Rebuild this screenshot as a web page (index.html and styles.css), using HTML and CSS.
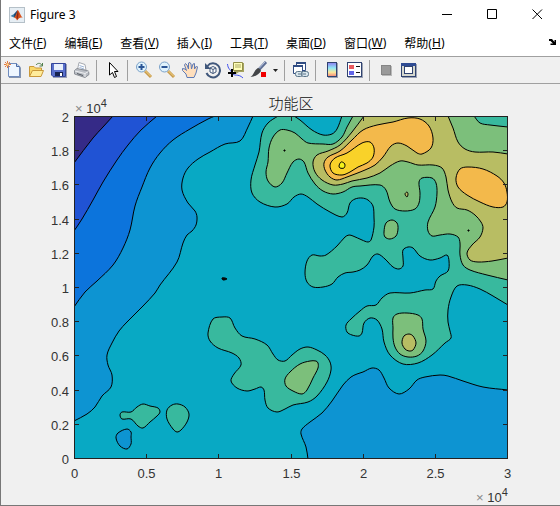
FILE: index.html
```
<!DOCTYPE html>
<html lang="zh-CN">
<head>
    <meta charset="UTF-8">
    <meta name="viewport" content="width=device-width, initial-scale=1.0">
    <title>Figure 3</title>
    <link rel="stylesheet" href="styles.css">
</head>
<body>
<div class="window">
    <header class="titlebar">
        <svg class="app-icon" viewBox="0 0 16 16" aria-hidden="true">
            <rect x="0.5" y="0.5" width="15" height="15" fill="#e6eef4" stroke="#b5c0c8"/>
            <path d="M1.5 9L5 7L7 8.5L5 10.5Z" fill="#3b7fa8"/>
            <path d="M5 7L8.5 3L8 9L5 10.5Z" fill="#1f4d78"/>
            <path d="M8.5 3C9.5 2 11 8 14 11C11.5 10 10 11 8 13.5C7.5 11.5 6.5 11 5 10.5C7 9 7.5 6 8.5 3Z" fill="#d9541e"/>
            <path d="M8.7 3.5L9.5 7L9 11L8 13L7.5 10Z" fill="#8c2a14"/>
        </svg>
        <h1 class="title">Figure 3</h1>
        <div class="window-buttons">
            <button type="button" aria-label="最小化"><svg viewBox="0 0 11 11"><path d="M0 5.5H10"/></svg></button>
            <button type="button" aria-label="最大化"><svg viewBox="0 0 11 11"><path d="M0.5 0.5H9.5V9.5H0.5Z"/></svg></button>
            <button type="button" aria-label="关闭"><svg viewBox="0 0 11 11"><path d="M0.5 0.5L10 10M10 0.5L0.5 10"/></svg></button>
        </div>
    </header>

    <nav class="menubar">
        <button type="button">文件(<u>F</u>)</button>
        <button type="button">编辑(<u>E</u>)</button>
        <button type="button">查看(<u>V</u>)</button>
        <button type="button">插入(<u>I</u>)</button>
        <button type="button">工具(<u>T</u>)</button>
        <button type="button">桌面(<u>D</u>)</button>
        <button type="button">窗口(<u>W</u>)</button>
        <button type="button">帮助(<u>H</u>)</button>
        <button type="button" class="dock" aria-label="停靠">
            <svg viewBox="0 0 8 7"><path d="M0 0H3L5.5 3V1H7V6H1.5V4.5H4L1.5 2H0Z" fill="#000"/></svg>
        </button>
    </nav>

    <div class="toolbar">
        <button type="button" aria-label="新建图形">
            <svg viewBox="0 0 18 18">
                <path d="M5 3H13.5L17 6.5V17H5Z" fill="#8494ae"/>
                <path d="M4.5 2.5H12.5L15.5 5.5V15.5H4.5Z" fill="#eef6ff" stroke="#6f8bbd"/>
                <path d="M12.5 2.5V5.5H15.5" fill="#c5d8f0" stroke="#4969a5"/>
                <path d="M1 1L6 6M6 1L1 6M3.5 0V7M0 3.5H7" stroke="#e57b42"/>
                <rect x="2.5" y="2.5" width="2" height="2" fill="#ffe89a"/>
            </svg>
        </button>
        <button type="button" aria-label="打开文件">
            <svg viewBox="0 0 18 18">
                <path d="M2.5 15.5V5.5H7L8.5 7H14.5V9" fill="#f8d76a" stroke="#c9983a"/>
                <path d="M2.5 15.5L5.5 9.5H16.5L14 15.5Z" fill="#ffec9b" stroke="#c9983a"/>
                <path d="M9 4C11 1.5 14 2 15 4.5M15.5 2V5H12.5" fill="none" stroke="#4e7d4a"/>
            </svg>
        </button>
        <button type="button" aria-label="保存图形">
            <svg viewBox="0 0 18 18">
                <path d="M2 3H17V17H3Z" fill="#9a9fb5"/>
                <path d="M1.5 2.5H15.5V15.5H3L1.5 14Z" fill="#5a70cc" stroke="#34469a"/>
                <rect x="4" y="3" width="9" height="6" fill="#e8f0fc"/>
                <rect x="5" y="11" width="8" height="4" fill="#17224f"/>
                <rect x="10" y="12" width="2" height="3" fill="#fff"/>
            </svg>
        </button>
        <button type="button" aria-label="打印图形">
            <svg viewBox="0 0 18 18">
                <path d="M4.5 8.5L6 1.5L12 3.5L13 9Z" fill="#fff" stroke="#a5a9b0"/>
                <path d="M6.5 4.5L11 6M6.5 6.5L11 8" stroke="#9bb4d6"/>
                <path d="M1.5 9.5L4 7.5L15.5 10L16 13.5L12 16.5L1.5 13Z" fill="#b9bdc4" stroke="#8b8f96"/>
                <path d="M2 10L12 12.5L15.5 10.5M12 12.5V16" fill="none" stroke="#eff0f2"/>
                <path d="M4 12.5L10 14.5" stroke="#555a61"/>
            </svg>
        </button>
        <span class="sep"></span>
        <button type="button" aria-label="编辑绘图">
            <svg viewBox="0 0 18 18"><path d="M5.5 1.5V14L8.5 11.5L10.5 16.5L12.5 15.5L10.5 10.5H14Z" fill="#fff" stroke="#000"/></svg>
        </button>
        <span class="sep"></span>
        <button type="button" aria-label="放大">
            <svg viewBox="0 0 18 18">
                <path d="M10 10L16 16" stroke="#c79a4c" stroke-width="3"/><path d="M10 9.5L16 15.5" stroke="#f5d78a"/>
                <circle cx="6.5" cy="6" r="5" fill="#dff2fc" stroke="#7aa1c9"/>
                <path d="M3.5 6H9.5M6.5 3V9" stroke="#2a5596" stroke-width="2"/>
            </svg>
        </button>
        <button type="button" aria-label="缩小">
            <svg viewBox="0 0 18 18">
                <path d="M10 10L16 16" stroke="#c79a4c" stroke-width="3"/><path d="M10 9.5L16 15.5" stroke="#f5d78a"/>
                <circle cx="6.5" cy="6" r="5" fill="#dff2fc" stroke="#7aa1c9"/>
                <path d="M3.5 6H9.5" stroke="#2a5596" stroke-width="2"/>
            </svg>
        </button>
        <button type="button" aria-label="平移">
            <svg viewBox="0 0 18 18"><path d="M6 16.5L5 13L1.5 9.5L1.5 7.5L4 8L5.5 9.5L3.5 4L4.5 2.5L6 4L7.5 8L7.5 2L9 1.5L10 3L10.5 8L12 3L13.5 2.5L13.5 8L15.5 5L16.5 6L15 12L13 16.5Z" fill="#ffdfbd" stroke="#5f7bb5"/></svg>
        </button>
        <button type="button" aria-label="三维旋转">
            <svg viewBox="0 0 18 18">
                <path d="M3.5 5A7 7 0 1 1 2.5 12" fill="none" stroke="#40577b" stroke-width="2"/>
                <path d="M1 2V8H7Z" fill="#40577b"/>
                <path d="M6 7L9 5.5L12 7V11L9 12.5L6 11ZM6 7L9 8.5L12 7M9 8.5V12.5" fill="#fff" stroke="#40577b"/>
            </svg>
        </button>
        <button type="button" aria-label="数据游标">
            <svg viewBox="0 0 18 18">
                <path d="M0.5 3C1 8 3 8 5 12S11 12 16 17" fill="none" stroke="#4252ed"/>
                <path d="M7 2H17V11H12L9 13V11H7Z" fill="#a5a35e"/>
                <path d="M6.5 1.5H15.5V9.5H6.5Z" fill="#ffffb8" stroke="#928f49"/>
                <path d="M8 4H14M8 6H14" stroke="#aaa766"/>
                <path d="M1 12H9M5 8V16" stroke="#000" stroke-width="2"/>
            </svg>
        </button>
        <button type="button" aria-label="刷亮数据">
            <svg viewBox="0 0 18 18">
                <path d="M16 1L8.5 9" stroke="#5d6d93" stroke-width="3"/>
                <path d="M15 1L9 7.5" stroke="#b9c5e0"/>
                <path d="M10 8L11 10C9 13 5 16 0.5 16C4 14 4 9 8 7Z" fill="#434548"/>
                <rect x="11" y="11" width="5" height="5" fill="#f00000"/>
            </svg>
        </button>
        <button type="button" class="drop" aria-label="刷亮选项"><svg viewBox="0 0 5 3"><path d="M0 0H5L2.5 3Z" fill="#222"/></svg></button>
        <span class="sep"></span>
        <button type="button" aria-label="链接绘图">
            <svg viewBox="0 0 18 18">
                <path d="M4.5 1.5H13.5V9.5H4.5Z" fill="#fff" stroke="#304c82"/><path d="M4 2H14" stroke="#304c82" stroke-width="2"/>
                <path d="M1.5 4.5H10.5V12.5H1.5Z" fill="#fff" stroke="#304c82"/><path d="M1 5H11" stroke="#304c82" stroke-width="2"/>
                <rect x="3.5" y="10.500" width="7" height="5" rx="2" fill="#d8e5ec" stroke="#5a7589"/>
                <rect x="9.5" y="10.500" width="7" height="5" rx="2" fill="#d8e5ec" stroke="#5a7589"/>
                <path d="M6 13H14" stroke="#5a7589"/>
            </svg>
        </button>
        <span class="sep"></span>
        <button type="button" aria-label="颜色栏">
            <svg viewBox="0 0 18 18">
                <defs><linearGradient id="bar" x2="0" y2="1"><stop stop-color="#8d7cf0"/><stop offset="0.4" stop-color="#8fe9f5"/><stop offset="0.7" stop-color="#fbe89a"/><stop offset="1" stop-color="#f58478"/></linearGradient></defs>
                <rect x="5" y="2" width="10" height="15" fill="#9ba2b2"/>
                <rect x="4.5" y="1.5" width="9" height="14" fill="url(#bar)" stroke="#304370"/>
            </svg>
        </button>
        <button type="button" aria-label="图例">
            <svg viewBox="0 0 18 18">
                <rect x="2" y="2" width="15" height="15" fill="#9ba2b2"/>
                <rect x="1.5" y="1.5" width="14" height="14" fill="#fff" stroke="#304370"/>
                <rect x="3" y="4" width="5" height="4" fill="#ea5b5f"/>
                <rect x="3" y="10" width="5" height="4" fill="#6265e8"/>
                <path d="M10 5.5H14M10 11.5H14" stroke="#111"/>
            </svg>
        </button>
        <span class="sep"></span>
        <button type="button" aria-label="隐藏绘图工具">
            <svg viewBox="0 0 18 18"><rect x="5" y="5" width="10" height="10" fill="#b9b9b9"/><rect x="4.5" y="4.5" width="9" height="9" fill="#9a9a9a" stroke="#858585"/></svg>
        </button>
        <button type="button" aria-label="显示绘图工具">
            <svg viewBox="0 0 18 18">
                <rect x="2" y="3" width="15" height="14" fill="#9ba2b2"/>
                <rect x="1.5" y="2.5" width="14" height="13" fill="#d6d8cf" stroke="#304370"/>
                <path d="M1 3.5H16" stroke="#304c93" stroke-width="3"/>
                <rect x="4.5" y="5.5" width="8" height="7" fill="#fff" stroke="#304370"/>
            </svg>
        </button>
    </div>

    <main class="figure">
        <svg class="chart" viewBox="1 84 559 421" role="img" aria-label="功能区">
            <defs>
                <clipPath id="plot-area"><rect x="74" y="116" width="434" height="343"/></clipPath>
            </defs>
            <text class="chart-title" x="291" y="109" text-anchor="middle">功能区</text>
            <g clip-path="url(#plot-area)">
                <rect x="74" y="116" width="434" height="343" fill="#08a9c4"/>
                <g id="contours"></g>
            </g>
            <rect class="axis" x="74.5" y="116.5" width="433" height="342"/>
            <g id="ticks"></g>
            <text x="75" y="113"><tspan class="times">×</tspan> 10<tspan class="power" dy="-6">4</tspan></text>
            <text x="476" y="502"><tspan class="times">×</tspan> 10<tspan class="power" dy="-6">4</tspan></text>
        </svg>
    </main>
</div>
<script src="contours.js"></script>
</body>
</html>
```
FILE: styles.css
```
body {
    margin: 0;
    background: #f0f0f0;
    color: #000;
    font-family: "Noto Sans", "Noto Sans CJK SC", sans-serif;
    font-size: 12px;
}

.window {
    border-left: 1px solid #777;
    border-bottom: 1px solid #777;
    background: #f0f0f0;
}

button {
    display: flex;
    align-items: center;
    justify-content: center;
    padding: 0;
    border: 0;
    background: none;
    color: inherit;
    font: inherit;
}

.titlebar {
    display: flex;
    align-items: center;
    height: 29px;
    padding-left: 8px;
    background: #fff;
}

.app-icon {
    width: 16px;
    height: 16px;
}

.title {
    margin: 0 0 0 5px;
    font-size: 12px;
    font-weight: 400;
}

.window-buttons {
    display: flex;
    margin-left: auto;
}

.window-buttons button {
    width: 45px;
    height: 29px;
}

.window-buttons svg {
    width: 11px;
    height: 11px;
    fill: none;
    stroke: #000;
}

.menubar {
    display: flex;
    align-items: center;
    gap: 18px;
    height: 27px;
    padding: 0 3px 0 8px;
    background: #fff;
}

.menubar button {
    white-space: nowrap;
}

.menubar u {
    text-underline-offset: 1px;
}

.menubar .dock {
    margin-left: auto;
}

.dock svg {
    width: 8px;
    height: 7px;
}

.toolbar {
    display: flex;
    align-items: center;
    height: 26px;
    border-top: 1px solid #a0a0a0;
    border-bottom: 1px solid #a0a0a0;
}

.toolbar button {
    width: 23px;
    height: 24px;
}

.toolbar svg {
    width: 18px;
    height: 18px;
    fill: none;
}

.toolbar .drop {
    width: 11px;
}

.toolbar .drop svg {
    width: 5px;
    height: 3px;
}

.sep {
    width: 1px;
    height: 21px;
    margin: 0 4px 0 3px;
    background: #a0a0a0;
}

.chart {
    display: block;
    width: 100%;
    height: auto;
    fill: #333;
    font-family: "Liberation Sans", "Noto Sans CJK SC", sans-serif;
    font-size: 13px;
}

.chart-title {
    fill: #111;
    font-size: 15px;
    font-weight: 300;
}

.line {
    fill: none;
    stroke: #000;
    stroke-width: 1px;
    stroke-linejoin: round;
}

.axis {
    fill: none;
    stroke: #222;
}

.times {
    fill: #888;
}

.power {
    font-size: 11px;
}
```
FILE: contours.js
```
const NS = "http://www.w3.org/2000/svg";
const L = 74, R = 508, T = 116, B = 459;

const navy = "#352a87", blue = "#2053d4", azure = "#0c74dc", sky = "#0d94d2", teal = "#08a9c4",
    sea = "#38b99e", green = "#7cbf7b", olive = "#b8bd63", orange = "#f3b94b", yellow = "#f9d229", lemon = "#f5f31b";

// pts: points on the line; close: corners that complete an area cut by the axes
const contours = [
    { fill: sky, close: [[L, T]], pts: [[253,116],[248,127],[240,141],[225,144],[210,152],[198,159],[188,168],[183,178],[182,190],[188,203],[195,211],[197,217],[196,225],[192,231],[187,235],[183,243],[177,262],[160,285],[155,293],[143,306],[127,322],[119,331],[112,343],[107,355],[108,365],[112,375],[111,387],[102,396],[95,407],[87,414],[74,421]] },
    { fill: azure, close: [[L, T]], pts: [[215,116],[208,119],[190,129],[173,140],[160,153],[150,168],[142,187],[135,206],[130,230],[123,248],[113,265],[97,281],[85,292],[74,307]] },
    { fill: blue, close: [[L, T]], pts: [[157,116],[141,130],[128,145],[117,160],[103,182],[93,200],[82,219],[74,231]] },
    { fill: navy, close: [[L, T]], pts: [[113,116],[103,127],[93,138],[74,163]] },
    { fill: sky, close: [[R, B]], pts: [[308,459],[306,447],[301,434],[302,429],[310,422],[322,413],[332,401],[343,385],[351,377],[357,374],[363,372],[372,368],[379,370],[384,378],[389,388],[399,394],[409,389],[417,380],[425,377],[440,375],[448,376],[463,381],[483,387],[508,390]] },
    { fill: sky, pts: [[127,429],[131,432],[131,437],[131,444],[127,449],[120,446],[116,438],[118,433]] },
    { fill: sea, pts: [[120,415],[122,412],[131,412],[137,407],[143,404],[150,406],[158,408],[160,412],[157,416],[150,422],[143,428],[138,426],[131,419],[122,419]] },
    { fill: sea, pts: [[178,404],[185,407],[189,414],[187,422],[181,430],[177,432],[173,429],[167,419],[167,410],[172,405]] },
    { fill: sea, pts: [[222,317],[230,318],[235,328],[242,336],[255,339],[267,345],[273,354],[278,360],[285,361],[292,355],[300,349],[308,347],[317,350],[325,355],[330,362],[331,370],[327,382],[317,396],[308,402],[293,405],[285,409],[277,412],[268,408],[265,400],[264,390],[261,387],[255,389],[247,391],[237,388],[231,381],[234,374],[241,365],[239,358],[232,353],[218,348],[210,341],[208,333],[213,319]] },
    { fill: green, pts: [[318,363],[318,368],[313,378],[307,390],[302,394],[293,391],[286,386],[285,379],[290,372],[300,364],[310,361],[316,361]] },

    { fill: sea, close: [[R, T]], pts: [[278,116],[268,123],[262,133],[259,152],[255,165],[251,180],[252,193],[260,202],[275,207],[287,204],[294,197],[301,194],[308,197],[317,204],[330,212],[342,217],[347,213],[350,203],[355,199],[362,198],[368,200],[373,206],[374,218],[374,227],[371,240],[368,242],[362,240],[353,236],[349,235],[345,237],[337,246],[326,255],[320,256],[312,255],[307,261],[305,273],[307,282],[313,287],[323,287],[332,284],[338,277],[345,273],[353,272],[360,270],[367,265],[373,256],[378,254],[385,259],[393,267],[399,269],[403,266],[403,258],[403,250],[408,247],[413,248],[420,256],[430,260],[440,258],[447,255],[449,261],[448,271],[440,276],[436,281],[433,289],[425,290],[410,293],[390,293],[382,298],[376,305],[367,306],[360,311],[351,319],[346,325],[347,332],[352,335],[359,336],[362,333],[364,323],[370,318],[377,320],[382,329],[384,342],[390,355],[403,364],[418,363],[432,355],[445,343],[451,338],[450,331],[448,322],[448,310],[451,297],[457,286],[467,285],[480,289],[493,296],[508,305]] },
    { fill: teal, close: [], pts: [[294,116],[300,120],[312,130],[323,135],[332,134],[337,129],[342,116]] },
    { fill: green, close: [[R, T]], pts: [[353,116],[347,127],[342,137],[333,144],[323,144],[308,143],[302,139],[295,133],[287,130],[280,130],[273,137],[269,148],[268,162],[266,172],[268,181],[275,187],[282,183],[287,173],[293,162],[299,159],[304,162],[308,173],[315,184],[323,191],[333,194],[343,192],[352,187],[360,186],[380,185],[386,190],[390,202],[395,209],[405,211],[415,209],[419,203],[420,193],[419,182],[422,178],[432,178],[436,183],[437,193],[435,207],[428,222],[428,231],[432,236],[440,235],[450,234],[458,237],[460,243],[460,255],[463,265],[470,270],[487,275],[508,280]] },
    { fill: green, pts: [[392,220],[397,223],[398,229],[396,236],[390,239],[385,237],[384,232],[386,223]] },
    { fill: green, pts: [[397,314],[407,313],[418,315],[422,319],[423,329],[426,341],[423,351],[417,356],[408,357],[400,354],[395,347],[393,338],[393,328],[393,318]] },
    { fill: olive, pts: [[409,334],[413,336],[416,343],[413,350],[409,351],[405,349],[402,343],[404,336]] },
    { fill: olive, close: [[R, T]], pts: [[364,116],[352,132],[340,145],[328,151],[317,155],[313,162],[315,172],[322,180],[333,185],[343,184],[352,181],[367,178],[380,173],[390,166],[400,161],[408,162],[418,165],[433,165],[442,168],[446,177],[448,190],[452,202],[457,208],[467,210],[475,215],[481,222],[483,228],[480,237],[472,245],[467,253],[470,260],[478,262],[492,261],[508,258]] },
    { fill: green, close: [[R, T]], pts: [[448,116],[453,128],[458,142],[465,149],[475,152],[493,152],[508,154]] },
    { fill: sea, close: [[R, T]], pts: [[474,116],[480,123],[490,125],[508,127]] },
    { fill: orange, pts: [[352,140],[363,130],[377,125],[393,122],[408,118],[420,119],[429,126],[433,138],[431,148],[422,154],[417,153],[407,146],[398,143],[391,146],[383,157],[375,165],[365,170],[355,174],[347,177],[337,180],[330,177],[325,170],[324,163],[328,157],[340,151]] },
    { fill: orange, pts: [[460,169],[468,167],[483,169],[497,176],[504,183],[507,192],[507,202],[503,207],[493,207],[480,202],[467,195],[458,187],[456,178]] },
    { fill: yellow, pts: [[362,143],[370,142],[374,148],[373,157],[367,163],[358,167],[350,172],[342,175],[333,173],[330,165],[335,158],[347,153]] },
    { fill: lemon, pts: [[341,162],[344,163],[345,165],[344,168],[340,168],[339,166]] },
    { fill: olive, pts: [[407,192],[408,194],[407,197],[405,194]] },
    { fill: "#111", pts: [[222,278],[225,278],[227,279],[223,280]] },
    { fill: "#111", pts: [[284,150],[285,150],[285,151],[284,151]] },
    { fill: "#111", pts: [[468,230],[469,230],[469,231],[468,231]] }
];

function add(parent, name, attrs, text) {
    const el = document.createElementNS(NS, name);
    for (const key in attrs) el.setAttribute(key, attrs[key]);
    if (text) el.textContent = text;
    parent.appendChild(el);
}

const dist = (a, b) => Math.hypot(b[0] - a[0], b[1] - a[1]);

// smooth curve through all the points, tangents weighted by segment length
function curve(pts, loop) {
    const n = pts.length;
    const at = i => loop ? pts[(i + n) % n] : pts[Math.max(0, Math.min(n - 1, i))];
    let d = "M" + pts[0];
    for (let i = 0; i < (loop ? n : n - 1); i++) {
        const a = at(i - 1), b = at(i), c = at(i + 1), e = at(i + 2);
        const len = dist(b, c);
        const s = len / (dist(a, b) + len) / 3;
        const t = len / (dist(c, e) + len) / 3;
        d += "C" + [b[0] + (c[0] - a[0]) * s, b[1] + (c[1] - a[1]) * s,
            c[0] - (e[0] - b[0]) * t, c[1] - (e[1] - b[1]) * t, c[0], c[1]].join(" ");
    }
    return d;
}

const layer = document.getElementById("contours");
contours.forEach(c => {
    const d = curve(c.pts, !c.close);
    const corners = (c.close || []).map(p => "L" + p).join("");
    add(layer, "path", { d: d + corners + "Z", fill: c.fill });
    add(layer, "path", { d: d, class: "line" });
});

const ticks = document.getElementById("ticks");
["0", "0.5", "1", "1.5", "2", "2.5", "3"].forEach((label, i) => {
    const x = Math.round(74 + i * 433 / 6) + 0.5;
    add(ticks, "path", { d: `M${x} 458v-4M${x} 117v4`, class: "axis" });
    add(ticks, "text", { x: x, y: 478, "text-anchor": "middle" }, label);
});
["0", "0.2", "0.4", "0.6", "0.8", "1", "1.2", "1.4", "1.6", "1.8", "2"].forEach((label, i) => {
    const y = Math.round(458 - i * 34.2) + 0.5;
    add(ticks, "path", { d: `M75 ${y}h4M507 ${y}h-4`, class: "axis" });
    add(ticks, "text", { x: 69, y: y + 5, "text-anchor": "end" }, label);
});
```
